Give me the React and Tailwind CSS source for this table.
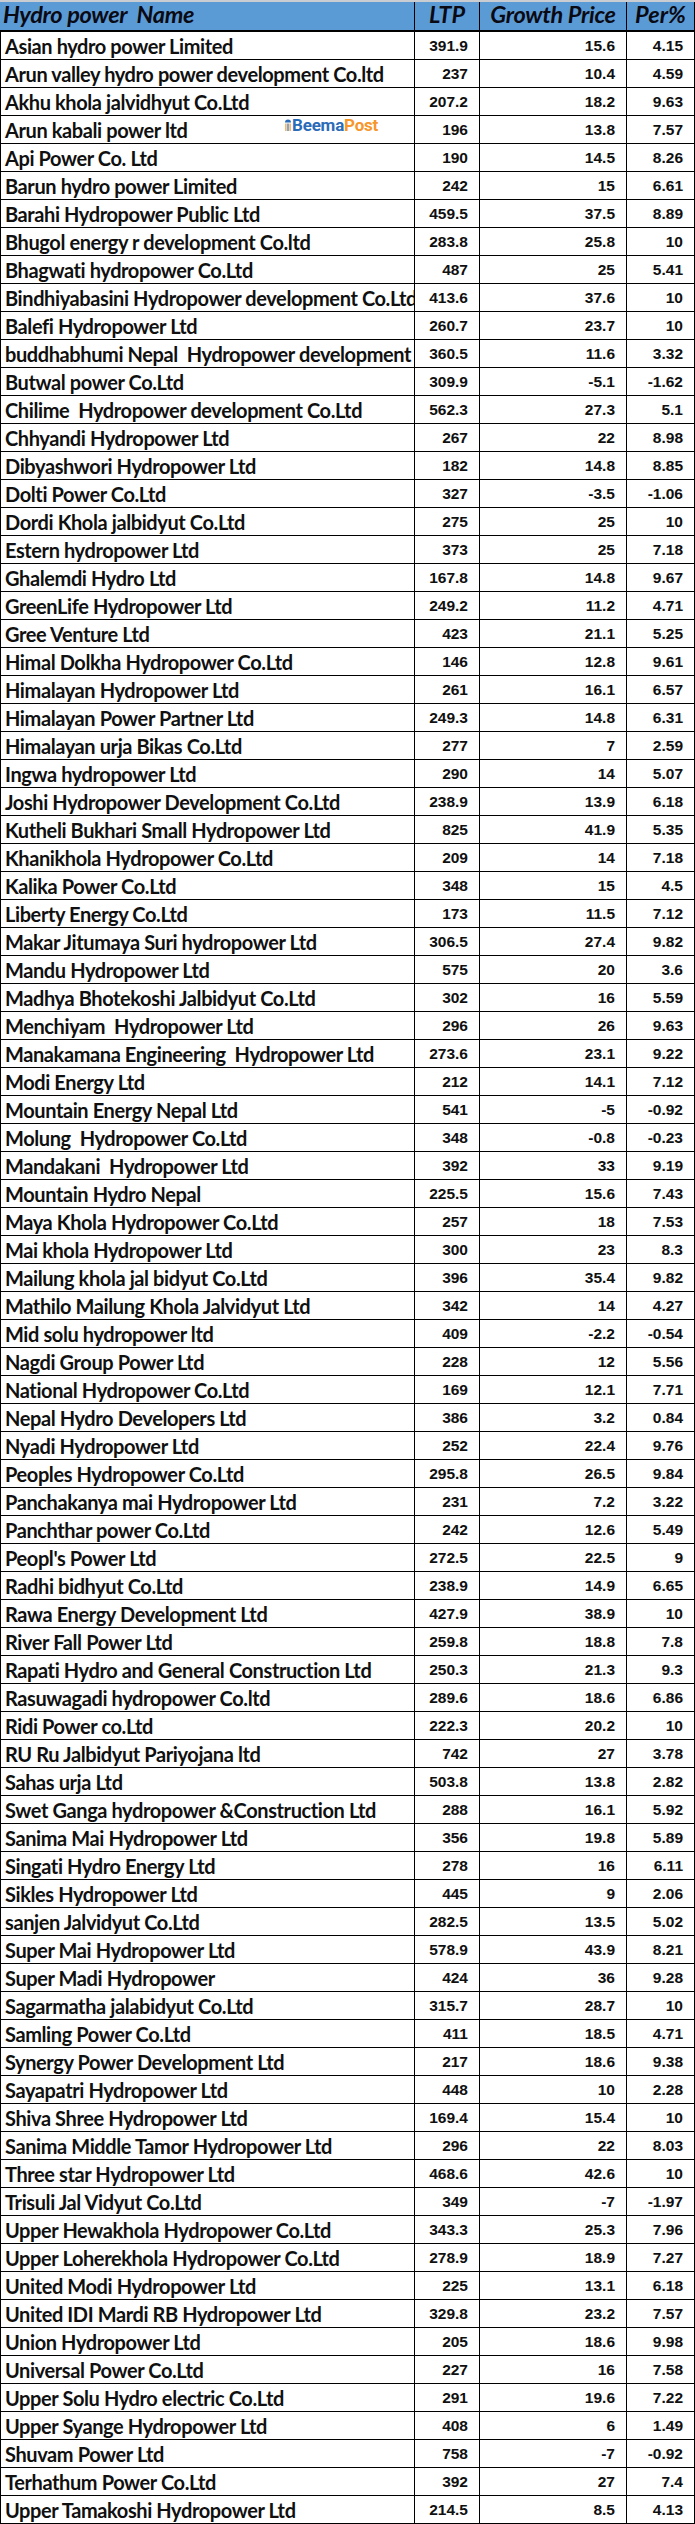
import React from "react";

// Hydro power share price table (Excel-like sheet)
const rows = [
  ["Asian hydro power Limited", "391.9", "15.6", "4.15"],
  ["Arun valley hydro power development Co.ltd", "237", "10.4", "4.59"],
  ["Akhu khola jalvidhyut Co.Ltd", "207.2", "18.2", "9.63"],
  ["Arun kabali power ltd", "196", "13.8", "7.57"],
  ["Api Power Co. Ltd", "190", "14.5", "8.26"],
  ["Barun hydro power Limited", "242", "15", "6.61"],
  ["Barahi Hydropower Public Ltd", "459.5", "37.5", "8.89"],
  ["Bhugol energy r development Co.ltd", "283.8", "25.8", "10"],
  ["Bhagwati hydropower Co.Ltd", "487", "25", "5.41"],
  ["Bindhiyabasini Hydropower development Co.Ltd", "413.6", "37.6", "10"],
  ["Balefi Hydropower Ltd", "260.7", "23.7", "10"],
  ["buddhabhumi Nepal  Hydropower development", "360.5", "11.6", "3.32"],
  ["Butwal power Co.Ltd", "309.9", "-5.1", "-1.62"],
  ["Chilime  Hydropower development Co.Ltd", "562.3", "27.3", "5.1"],
  ["Chhyandi Hydropower Ltd", "267", "22", "8.98"],
  ["Dibyashwori Hydropower Ltd", "182", "14.8", "8.85"],
  ["Dolti Power Co.Ltd", "327", "-3.5", "-1.06"],
  ["Dordi Khola jalbidyut Co.Ltd", "275", "25", "10"],
  ["Estern hydropower Ltd", "373", "25", "7.18"],
  ["Ghalemdi Hydro Ltd", "167.8", "14.8", "9.67"],
  ["GreenLife Hydropower Ltd", "249.2", "11.2", "4.71"],
  ["Gree Venture Ltd", "423", "21.1", "5.25"],
  ["Himal Dolkha Hydropower Co.Ltd", "146", "12.8", "9.61"],
  ["Himalayan Hydropower Ltd", "261", "16.1", "6.57"],
  ["Himalayan Power Partner Ltd", "249.3", "14.8", "6.31"],
  ["Himalayan urja Bikas Co.Ltd", "277", "7", "2.59"],
  ["Ingwa hydropower Ltd", "290", "14", "5.07"],
  ["Joshi Hydropower Development Co.Ltd", "238.9", "13.9", "6.18"],
  ["Kutheli Bukhari Small Hydropower Ltd", "825", "41.9", "5.35"],
  ["Khanikhola Hydropower Co.Ltd", "209", "14", "7.18"],
  ["Kalika Power Co.Ltd", "348", "15", "4.5"],
  ["Liberty Energy Co.Ltd", "173", "11.5", "7.12"],
  ["Makar Jitumaya Suri hydropower Ltd", "306.5", "27.4", "9.82"],
  ["Mandu Hydropower Ltd", "575", "20", "3.6"],
  ["Madhya Bhotekoshi Jalbidyut Co.Ltd", "302", "16", "5.59"],
  ["Menchiyam  Hydropower Ltd", "296", "26", "9.63"],
  ["Manakamana Engineering  Hydropower Ltd", "273.6", "23.1", "9.22"],
  ["Modi Energy Ltd", "212", "14.1", "7.12"],
  ["Mountain Energy Nepal Ltd", "541", "-5", "-0.92"],
  ["Molung  Hydropower Co.Ltd", "348", "-0.8", "-0.23"],
  ["Mandakani  Hydropower Ltd", "392", "33", "9.19"],
  ["Mountain Hydro Nepal", "225.5", "15.6", "7.43"],
  ["Maya Khola Hydropower Co.Ltd", "257", "18", "7.53"],
  ["Mai khola Hydropower Ltd", "300", "23", "8.3"],
  ["Mailung khola jal bidyut Co.Ltd", "396", "35.4", "9.82"],
  ["Mathilo Mailung Khola Jalvidyut Ltd", "342", "14", "4.27"],
  ["Mid solu hydropower ltd", "409", "-2.2", "-0.54"],
  ["Nagdi Group Power Ltd", "228", "12", "5.56"],
  ["National Hydropower Co.Ltd", "169", "12.1", "7.71"],
  ["Nepal Hydro Developers Ltd", "386", "3.2", "0.84"],
  ["Nyadi Hydropower Ltd", "252", "22.4", "9.76"],
  ["Peoples Hydropower Co.Ltd", "295.8", "26.5", "9.84"],
  ["Panchakanya mai Hydropower Ltd", "231", "7.2", "3.22"],
  ["Panchthar power Co.Ltd", "242", "12.6", "5.49"],
  ["Peopl's Power Ltd", "272.5", "22.5", "9"],
  ["Radhi bidhyut Co.Ltd", "238.9", "14.9", "6.65"],
  ["Rawa Energy Development Ltd", "427.9", "38.9", "10"],
  ["River Fall Power Ltd", "259.8", "18.8", "7.8"],
  ["Rapati Hydro and General Construction Ltd", "250.3", "21.3", "9.3"],
  ["Rasuwagadi hydropower Co.ltd", "289.6", "18.6", "6.86"],
  ["Ridi Power co.Ltd", "222.3", "20.2", "10"],
  ["RU Ru Jalbidyut Pariyojana ltd", "742", "27", "3.78"],
  ["Sahas urja Ltd", "503.8", "13.8", "2.82"],
  ["Swet Ganga hydropower &Construction Ltd", "288", "16.1", "5.92"],
  ["Sanima Mai Hydropower Ltd", "356", "19.8", "5.89"],
  ["Singati Hydro Energy Ltd", "278", "16", "6.11"],
  ["Sikles Hydropower Ltd", "445", "9", "2.06"],
  ["sanjen Jalvidyut Co.Ltd", "282.5", "13.5", "5.02"],
  ["Super Mai Hydropower Ltd", "578.9", "43.9", "8.21"],
  ["Super Madi Hydropower", "424", "36", "9.28"],
  ["Sagarmatha jalabidyut Co.Ltd", "315.7", "28.7", "10"],
  ["Samling Power Co.Ltd", "411", "18.5", "4.71"],
  ["Synergy Power Development Ltd", "217", "18.6", "9.38"],
  ["Sayapatri Hydropower Ltd", "448", "10", "2.28"],
  ["Shiva Shree Hydropower Ltd", "169.4", "15.4", "10"],
  ["Sanima Middle Tamor Hydropower Ltd", "296", "22", "8.03"],
  ["Three star Hydropower Ltd", "468.6", "42.6", "10"],
  ["Trisuli Jal Vidyut Co.Ltd", "349", "-7", "-1.97"],
  ["Upper Hewakhola Hydropower Co.Ltd", "343.3", "25.3", "7.96"],
  ["Upper Loherekhola Hydropower Co.Ltd", "278.9", "18.9", "7.27"],
  ["United Modi Hydropower Ltd", "225", "13.1", "6.18"],
  ["United IDI Mardi RB Hydropower Ltd", "329.8", "23.2", "7.57"],
  ["Union Hydropower Ltd", "205", "18.6", "9.98"],
  ["Universal Power Co.Ltd", "227", "16", "7.58"],
  ["Upper Solu Hydro electric Co.Ltd", "291", "19.6", "7.22"],
  ["Upper Syange Hydropower Ltd", "408", "6", "1.49"],
  ["Shuvam Power Ltd", "758", "-7", "-0.92"],
  ["Terhathum Power Co.Ltd", "392", "27", "7.4"],
  ["Upper Tamakoshi Hydropower Ltd", "214.5", "8.5", "4.13"],
];

const grid = "grid grid-cols-[415px_65px_147px_68px]";
const num = "flex items-end justify-end pb-[6px] pr-[11px] border-r border-black font-['Liberation_Sans',Arial,sans-serif] font-bold text-[15.5px] leading-none";

function BeemaPost() {
  return (
    <div className="absolute left-[285px] top-[117px] flex items-end pointer-events-none">
      <svg width="6" height="13" viewBox="0 0 6 13" className="mr-[1px] mb-[3px]">
        <path d="M0 4.5 A3 3 0 0 1 6 4.5 Z" fill="#2b6cb8" />
        <rect x="0.3" y="5.5" width="1.2" height="7.5" fill="#f29a2e" />
        <rect x="2.4" y="5.5" width="1.2" height="7.5" fill="#2b6cb8" />
        <rect x="4.5" y="5.5" width="1.2" height="7.5" fill="#f29a2e" />
      </svg>
      <div className="font-['Roboto',sans-serif] text-[17px] font-bold leading-none tracking-[-0.2px] whitespace-nowrap">
        <span className="text-[#2b6cb8]">Beema</span>
        <span className="text-[#f7962b]">Post</span>
      </div>
    </div>
  );
}

export default function App() {
  return (
    <div className="relative w-[695px] bg-white text-[#101010]">
      <div className={`${grid} h-[32px] bg-[#5b9bd5] border-t-[2px] border-t-[#c9ccd0] border-b-[2px] border-b-black font-['Lato',sans-serif] italic font-bold text-[23.5px] leading-none text-[#0a0a14]`}>
        <div className="flex items-end pb-[4px] pl-[3px] border-r border-black whitespace-pre tracking-[-0.3px]">Hydro power  Name</div>
        <div className="flex items-end justify-center pb-[4px] border-r border-black">LTP</div>
        <div className="flex items-end justify-center pb-[4px] border-r border-black tracking-[-0.3px]">Growth Price</div>
        <div className="flex items-end justify-center pb-[4px] border-r border-black">Per%</div>
      </div>
      {rows.map(([name, ltp, growth, per], i) => (
        <div key={i} className={`${grid} h-[28px] border-b border-black`}>
          <div className="flex items-end overflow-hidden pb-[3px] pl-[4px] border-l border-r border-black font-['Lato',sans-serif] font-bold text-[20px] leading-none whitespace-pre tracking-[-0.4px]">
            {name}
          </div>
          <div className={num}>{ltp}</div>
          <div className={num}>{growth}</div>
          <div className={num}>{per}</div>
        </div>
      ))}
      <BeemaPost />
    </div>
  );
}
